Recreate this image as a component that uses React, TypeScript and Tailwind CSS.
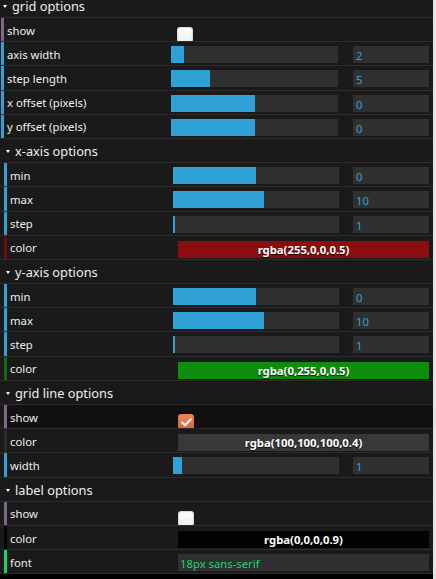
import { Check } from "lucide-react";

type Ctrl =
  | { kind: "bool"; label: string; checked?: boolean; hover?: boolean }
  | { kind: "num"; label: string; value: string; fill: number }
  | { kind: "color"; label: string; value: string; bg: string; border: string }
  | { kind: "str"; label: string; value: string };

type Folder = {
  title: string;
  top?: boolean;
  rows: Ctrl[];
};

const folders: Folder[] = [
  {
    title: "grid options",
    top: true,
    rows: [
      { kind: "bool", label: "show" },
      { kind: "num", label: "axis width", value: "2", fill: 13 },
      { kind: "num", label: "step length", value: "5", fill: 39 },
      { kind: "num", label: "x offset (pixels)", value: "0", fill: 84 },
      { kind: "num", label: "y offset (pixels)", value: "0", fill: 84 },
    ],
  },
  {
    title: "x-axis options",
    rows: [
      { kind: "num", label: "min", value: "0", fill: 83 },
      { kind: "num", label: "max", value: "10", fill: 91 },
      { kind: "num", label: "step", value: "1", fill: 2 },
      {
        kind: "color",
        label: "color",
        value: "rgba(255,0,0,0.5)",
        bg: "bg-[#8c0d0d]",
        border: "border-l-[#6e0b0b]",
      },
    ],
  },
  {
    title: "y-axis options",
    rows: [
      { kind: "num", label: "min", value: "0", fill: 83 },
      { kind: "num", label: "max", value: "10", fill: 91 },
      { kind: "num", label: "step", value: "1", fill: 2 },
      {
        kind: "color",
        label: "color",
        value: "rgba(0,255,0,0.5)",
        bg: "bg-[#0d8c0d]",
        border: "border-l-[#0b6e0b]",
      },
    ],
  },
  {
    title: "grid line options",
    rows: [
      { kind: "bool", label: "show", checked: true, hover: true },
      {
        kind: "color",
        label: "color",
        value: "rgba(100,100,100,0.4)",
        bg: "bg-[#383838]",
        border: "border-l-[#2a2a2a]",
      },
      { kind: "num", label: "width", value: "1", fill: 9 },
    ],
  },
  {
    title: "label options",
    rows: [
      { kind: "bool", label: "show" },
      {
        kind: "color",
        label: "color",
        value: "rgba(0,0,0,0.9)",
        bg: "bg-[#030303]",
        border: "border-l-[#030303]",
      },
      { kind: "str", label: "font", value: "18px sans-serif" },
    ],
  },
];

function Row({ c, top }: { c: Ctrl; top?: boolean }) {
  const border =
    c.kind === "bool"
      ? "border-l-[#806787]"
      : c.kind === "num"
      ? "border-l-[#2fa1d6]"
      : c.kind === "str"
      ? "border-l-[#1ed36f]"
      : c.border;

  const hover = c.kind === "bool" && c.hover;

  return (
    <div
      className={`flex h-[24.2px] shrink-0 overflow-hidden border-b border-[#2c2c2c] bg-[#1a1a1a] ${
        top ? "pl-[1px]" : "pl-[4px]"
      }`}
    >
      <div
        className={`flex flex-1 border-l-[3px] pr-[4px] ${border} ${
          hover ? "bg-[#111]" : ""
        }`}
      >
        <div
          className={`flex shrink-0 items-center pl-[3px] pt-[3px] text-[11.3px] text-[#eee] ${
            top ? "w-[167px]" : "w-[166px]"
          }`}
        >
          {c.label}
        </div>

        {c.kind === "num" && (
          <div className="flex flex-1">
            <div
              className={`mt-[4px] h-[17px] bg-[#303030] ${
                top ? "w-[167px]" : "w-[166px]"
              }`}
            >
              <div
                className="h-full bg-[#2fa1d6]"
                style={{ width: c.fill }}
              />
            </div>
            <div className="ml-auto mt-[4px] h-[17px] flex-1 max-w-[76px] bg-[#303030] pl-[3px] text-[11.3px] leading-[19px] text-[#2fa1d6]">
              {c.value}
            </div>
          </div>
        )}

        {c.kind === "bool" && (
          <div className={top ? "ml-[6px] mt-[9px]" : "ml-[5px] mt-[9px]"}>
            {c.checked ? (
              <div className="flex h-4 w-4 items-center justify-center rounded-[3px] bg-gradient-to-b from-[#f08558] to-[#d8653d] shadow-[inset_0_0_1px_rgba(0,0,0,0.4)]">
                <Check size={13} strokeWidth={3.5} className="text-white" />
              </div>
            ) : (
              <div className="h-4 w-4 rounded-[3px] bg-gradient-to-b from-white to-[#eeeeee] shadow-[inset_0_0_2px_rgba(0,0,0,0.45)]" />
            )}
          </div>
        )}

        {c.kind === "color" && (
          <div
            className={`ml-[5px] mt-[5px] flex h-[17px] flex-1 items-center justify-center pt-[2px] text-[11.3px] font-bold text-white [text-shadow:0_1px_1px_rgba(0,0,0,0.8)] ${c.bg}`}
          >
            {c.value}
          </div>
        )}

        {c.kind === "str" && (
          <div className="ml-[5px] mt-[4px] h-[17px] flex-1 bg-[#303030] pl-[2px] text-[11.3px] leading-[19px] text-[#1ed36f]">
            {c.value}
          </div>
        )}
      </div>
    </div>
  );
}

function Title({ text, top }: { text: string; top?: boolean }) {
  return (
    <div
      className={`flex h-[24.2px] shrink-0 items-center border-b border-[#2c2c2c] bg-[#1a1a1a] ${
        top ? "pl-[3px]" : "pl-[6px]"
      }`}
    >
      <span className="mt-[2px] h-0 w-0 border-x-[2px] border-t-[3px] border-x-transparent border-t-white" />
      <span className="ml-[5px] pt-[3px] text-[12.8px] text-[#eee]">{text}</span>
    </div>
  );
}

export default function App() {
  return (
    <div className="flex h-[579px] w-[436px] bg-[#e4e4e4] font-['Noto_Sans',sans-serif]">
      <div className="h-[579px] w-[433px] overflow-hidden bg-black">
        <div className="-mt-[6.2px] flex flex-col">
          {folders.map((f) => (
            <div key={f.title} className="flex flex-col">
              <Title text={f.title} top={f.top} />
              {f.rows.map((r, i) => (
                <Row key={i} c={r} top={f.top} />
              ))}
            </div>
          ))}
        </div>
      </div>
    </div>
  );
}
